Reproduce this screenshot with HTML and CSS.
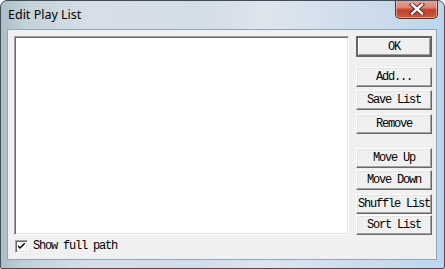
FILE: index.html
```html
<!DOCTYPE html>
<html>
<head>
<meta charset="utf-8">
<link rel="stylesheet" href="styles.css">
</head>
<body>
<div class="window">
  <div class="titlebar">
    <span class="title">Edit Play List</span>
    <div class="close">
      <svg width="18" height="12" viewBox="0 0 18 12"><path d="M4 1.5 L14 10.5 M14 1.5 L4 10.5" stroke="#4a2020" stroke-width="4.2" stroke-linecap="square"/><path d="M4 1.5 L14 10.5 M14 1.5 L4 10.5" stroke="#fff" stroke-width="2.4" stroke-linecap="square"/></svg>
    </div>
  </div>
  <div class="client">
    <div class="main">
      <div class="listbox"></div>
      <div class="buttons">
        <div class="btn default">OK</div>
        <div class="btn g1">Add...</div>
        <div class="btn g2">Save List</div>
        <div class="btn g3">Remove</div>
        <div class="btn g4">Move Up</div>
        <div class="btn g5">Move Down</div>
        <div class="btn g6">Shuffle List</div>
        <div class="btn g7">Sort List</div>
      </div>
    </div>
    <div class="checkrow">
      <div class="checkbox">
        <svg width="7" height="7" viewBox="0 0 7 7"><path d="M0 2 L0 4 L2 6 L7 1 L7 -1 L2 4 Z" fill="#000"/></svg>
      </div>
      <span class="label">Show full path</span>
    </div>
  </div>
</div>
</body>
</html>
```

FILE: styles.css
```css
html, body {
  margin: 0;
  padding: 0;
  background: #fff;
}
.window {
  width: 445px;
  height: 269px;
  box-sizing: border-box;
  border: 1px solid #404c58;
  border-radius: 7px 7px 2px 2px;
  background: linear-gradient(to right, #a9c0c6 0%, #c4d2d8 6%, #d6dfe7 20%, #d3dde7 45%, #dde5ed 60%, #cbdbea 85%, #bbd7ee 100%);
  display: flex;
  flex-direction: column;
  overflow: hidden;
  position: relative;
}
.titlebar {
  height: 28px;
  display: flex;
  align-items: flex-start;
  position: relative;
}
.title {
  font-family: "Noto Sans", "DejaVu Sans", sans-serif;
  font-size: 12.5px;
  color: #000;
  margin: 6px 0 0 7px;
  line-height: 16px;
}
.close {
  position: absolute;
  top: -1px;
  right: 6px;
  width: 43px;
  height: 19px;
  box-sizing: border-box;
  border: 1px solid #6b2a22;
  border-top: none;
  border-radius: 0 0 5px 5px;
  background: linear-gradient(to bottom, #e8a493 0%, #d88a77 40%, #c4402c 55%, #c75a3f 100%);
  display: flex;
  align-items: center;
  justify-content: center;
  box-shadow: inset 0 0 0 1px rgba(255, 220, 210, 0.5);
}
.client {
  margin: 0 7px 8px 6px;
  flex: 1;
  border: 1px solid #8ea5b8;
  background: #f0f0f0;
  display: flex;
  flex-direction: column;
  padding: 6px 3px 0 6px;
}
.main {
  display: flex;
  gap: 7px;
}
.listbox {
  width: 335px;
  height: 199px;
  box-sizing: border-box;
  background: #fff;
  border-style: solid;
  border-width: 1px;
  border-color: #a0a0a0 #fff #fff #a0a0a0;
  box-shadow: inset 1px 1px 0 #696969, inset -1px -1px 0 #e3e3e3;
}
.buttons {
  display: flex;
  flex-direction: column;
  width: 76px;
}
.btn {
  height: 20px;
  box-sizing: border-box;
  background: #f0f0f0;
  border-style: solid;
  border-width: 1px;
  border-color: #fff #696969 #696969 #fff;
  box-shadow: inset -1px -1px 0 #a0a0a0, inset 1px 1px 0 #e3e3e3;
  font-family: "Liberation Mono", "DejaVu Sans Mono", monospace;
  font-size: 12px;
  letter-spacing: -1.2px;
  color: #000;
  display: flex;
  align-items: center;
  justify-content: center;
  white-space: nowrap;
}
.btn.default {
  height: 21px;
  border: 2px solid #646464;
  box-shadow: inset 1px 1px 0 #fff, inset -1px -1px 0 #a0a0a0;
}
.g1 { margin-top: 10px; }
.g2 { margin-top: 3px; }
.g3 { margin-top: 4px; }
.g4 { margin-top: 14px; }
.g5 { margin-top: 2px; }
.g6 { margin-top: 4px; }
.g7 { margin-top: 1px; }
.checkrow {
  display: flex;
  align-items: center;
  margin-top: 4px;
  margin-left: 1px;
  gap: 5px;
}
.checkbox {
  width: 13px;
  height: 13px;
  box-sizing: border-box;
  background: #fff;
  border-style: solid;
  border-width: 1px;
  border-color: #a0a0a0 #fff #fff #a0a0a0;
  box-shadow: inset 1px 1px 0 #696969, inset -1px -1px 0 #e3e3e3;
  display: flex;
  align-items: center;
  justify-content: center;
}
.label {
  font-family: "Liberation Mono", "DejaVu Sans Mono", monospace;
  font-size: 12px;
  letter-spacing: -1.2px;
  color: #000;
}
```
